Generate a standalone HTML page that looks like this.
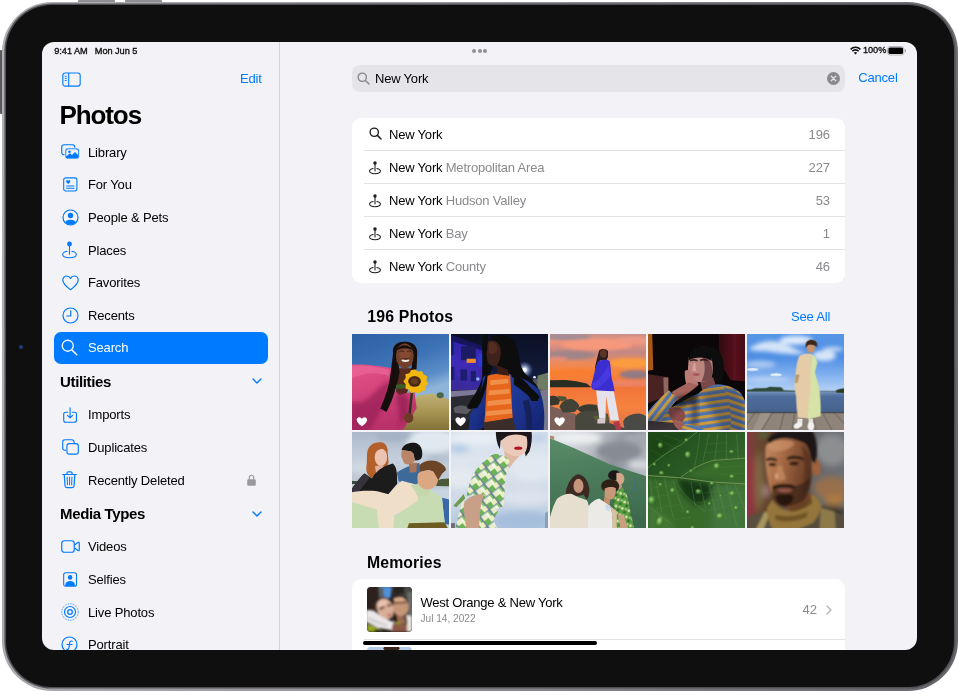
<!DOCTYPE html>
<html lang="en">
<head>
<meta charset="utf-8">
<title>Photos – Search</title>
<style>
*{box-sizing:border-box;margin:0;padding:0}
html,body{width:958px;height:692px;background:#fff;overflow:hidden}
body{font-family:"Liberation Sans",sans-serif;color:#000;position:relative;-webkit-font-smoothing:antialiased}
.abs{position:absolute}
#btn1,#btn2{position:absolute;top:0;height:4px;background:#8e8e93;border-radius:1px}
#btn1{left:78px;width:37px}
#btn2{left:125px;width:37px}
#btn3{position:absolute;left:0;top:50px;width:4px;height:64px;background:#58585d;border-radius:1px}
#device{position:absolute;left:2px;top:1.5px;width:955.7px;height:689px;border-radius:50px;background:linear-gradient(100deg,#b0b0b5 0%,#97979c 40%,#77777d 75%,#66666c 100%)}
#bezel{position:absolute;left:5.6px;top:5.1px;width:948.6px;height:682px;border-radius:46px;background:#0f0f0f;box-shadow:0 0 0 1.6px #505055}
#cam{position:absolute;left:19px;top:345px;width:4px;height:4px;border-radius:50%;background:#1d3f7a}
#screen{will-change:transform;position:absolute;left:42px;top:42px;width:875px;height:608px;border-radius:12px;background:#f2f2f7;overflow:hidden}
#screen *{position:absolute}
.t{white-space:nowrap;line-height:1}
#divider{left:237px;top:0;width:1px;height:608px;background:#d4d4d9}
.sb{font-size:13px;left:46px;color:#000;letter-spacing:-0.15px}
.hd{font-size:15px;font-weight:bold;left:18px;letter-spacing:-0.35px}
.blue{color:#007aff}
.gray{color:#8a8a8e}
.ico{overflow:visible}
#sel{left:12px;top:289.6px;width:214px;height:32.4px;border-radius:7px;background:#007aff}
#searchbar{left:310px;top:23px;width:493px;height:27px;border-radius:8px;background:#e4e4e9}
.card{background:#fff;border-radius:9px}
.sep{height:1px;background:#e2e2e5}
.row{font-size:13px;letter-spacing:-0.2px}
.cnt{font-size:13px;color:#8a8a8e;text-align:right;width:60px;left:728px;letter-spacing:-0.1px}
.ph{width:96.8px;height:96.5px;overflow:hidden;background:#888}
.ph svg{left:0;top:0;width:100%;height:100%}
</style>
</head>
<body>
<div id="btn1"></div><div id="btn2"></div><div id="btn3"></div>
<div id="device"></div><div id="bezel"></div>
<div id="cam"></div>
<div id="screen">
  
  <div class="t" id="st-time" style="left:12.3px;top:4.8px;font-size:9.2px;-webkit-text-stroke:0.35px #111;letter-spacing:-0.05px;color:#111">9:41 AM</div>
  <div class="t" id="st-date" style="left:52.8px;top:4.8px;font-size:9.2px;-webkit-text-stroke:0.35px #111;letter-spacing:-0.05px;color:#111">Mon Jun 5</div>
  <svg class="ico" id="st-wifi" style="left:808px;top:4px" width="11" height="9" viewBox="0 0 22 16">
    <path d="M11 16 L7.6 12.4 A5 5 0 0 1 14.4 12.4 Z" fill="#111"/>
    <path d="M4.6 9.4 A9 9 0 0 1 17.4 9.4" fill="none" stroke="#111" stroke-width="3.1" stroke-linecap="butt"/>
    <path d="M1.2 5.8 A13.6 13.6 0 0 1 20.8 5.8" fill="none" stroke="#111" stroke-width="3.1" stroke-linecap="butt"/>
  </svg>
  <div class="t" id="st-pct" style="left:821px;top:4.3px;font-size:9.2px;-webkit-text-stroke:0.35px #111;letter-spacing:-0.05px;color:#111">100%</div>
  <svg class="ico" id="st-batt" style="left:845px;top:3.5px" width="20" height="10" viewBox="0 0 40 20">
    <rect x="1" y="1" width="33" height="17" rx="5" fill="none" stroke="#a0a0a4" stroke-width="1.4"/>
    <rect x="2.8" y="2.8" width="29.4" height="13.4" rx="3.4" fill="#000"/>
    <path d="M36 6.5 A3.4 3.4 0 0 1 36 12.5 Z" fill="#8a8a8e"/>
  </svg>
  
  <div style="left:430px;top:7.2px;width:4px;height:4px;border-radius:50%;background:#909095"></div>
  <div style="left:435.7px;top:7.2px;width:4px;height:4px;border-radius:50%;background:#909095"></div>
  <div style="left:441.4px;top:7.2px;width:4px;height:4px;border-radius:50%;background:#909095"></div>

  
  <div id="divider"></div>
  <svg class="ico" id="i-sidebar" style="left:19.5px;top:29.5px" width="19" height="15" viewBox="0 0 40 32">
    <rect x="1.5" y="2" width="37" height="28" rx="5" fill="none" stroke="#007aff" stroke-width="2.4"/>
    <line x1="14" y1="2" x2="14" y2="30" stroke="#007aff" stroke-width="2.4"/>
    <line x1="5.5" y1="9" x2="10" y2="9" stroke="#007aff" stroke-width="2"/>
    <line x1="5.5" y1="13.5" x2="10" y2="13.5" stroke="#007aff" stroke-width="2"/>
    <line x1="5.5" y1="18" x2="10" y2="18" stroke="#007aff" stroke-width="2"/>
  </svg>
  <div class="t blue" id="edit" style="left:198px;top:30px;font-size:13px;letter-spacing:-0.2px">Edit</div>
  <div class="t" id="title" style="left:17.5px;top:60px;font-size:26px;font-weight:bold;letter-spacing:-1.1px">Photos</div>

  <div class="t sb" id="s1" style="top:104px">Library</div>
  <div class="t sb" id="s2" style="top:136px">For You</div>
  <div class="t sb" id="s3" style="top:169px">People &amp; Pets</div>
  <div class="t sb" id="s4" style="top:202px">Places</div>
  <div class="t sb" id="s5" style="top:234px">Favorites</div>
  <div class="t sb" id="s6" style="top:267px">Recents</div>
  <div id="sel"></div>
  <div class="t sb" id="s7" style="top:299.2px;color:#fff">Search</div>
  <div class="t hd" id="h1" style="top:332px">Utilities</div>
  <div class="t sb" id="s8" style="top:366px">Imports</div>
  <div class="t sb" id="s9" style="top:399px">Duplicates</div>
  <div class="t sb" id="s10" style="top:431.5px">Recently Deleted</div>
  <div class="t hd" id="h2" style="top:464px">Media Types</div>
  <div class="t sb" id="s11" style="top:498px">Videos</div>
  <div class="t sb" id="s12" style="top:531px">Selfies</div>
  <div class="t sb" id="s13" style="top:563.5px">Live Photos</div>
  <div class="t sb" id="s14" style="top:596px">Portrait</div>

  
  <svg class="ico" id="i-lib" style="left:18.5px;top:102.3px" width="19" height="16" viewBox="0 0 38 32">
    <rect x="1.5" y="1.5" width="26" height="20" rx="4.5" fill="none" stroke="#007aff" stroke-width="2.4"/>
    <rect x="8" y="8" width="28.5" height="22" rx="4.5" fill="#007aff" stroke="#f2f2f7" stroke-width="1.6"/>
    <path d="M10.5 25 L18 18.5 L22 22 L28 16 L34 22 L34 14 Q34 10.5 30.5 10.5 L14 10.5 Q10.5 10.5 10.5 14 Z" fill="#f2f2f7"/>
    <circle cx="17" cy="15.5" r="2.6" fill="#007aff"/>
  </svg>
  <svg class="ico" id="i-foryou" style="left:20.6px;top:135.2px" width="14.6" height="14.8" preserveAspectRatio="none" viewBox="0 0 32 34">
    <rect x="1.5" y="2" width="29" height="30" rx="4.5" fill="none" stroke="#007aff" stroke-width="2.4"/>
    <path d="M11.5 16 C6 12 6 7.5 9 7.5 C10.5 7.5 11.5 8.8 11.5 9.6 C11.5 8.8 12.5 7.5 14 7.5 C17 7.5 17 12 11.5 16 Z" fill="#007aff"/>
    <line x1="7" y1="20.5" x2="25" y2="20.5" stroke="#007aff" stroke-width="2.2"/>
    <line x1="7" y1="26" x2="25" y2="26" stroke="#007aff" stroke-width="2.2"/>
  </svg>
  <svg class="ico" id="i-people" style="left:19.5px;top:167.0px" width="17" height="17" viewBox="0 0 34 34">
    <defs><clipPath id="cp1"><circle cx="17" cy="17" r="14.5"/></clipPath></defs>
    <circle cx="17" cy="17" r="15" fill="none" stroke="#007aff" stroke-width="2.4"/>
    <circle cx="17" cy="13" r="5.4" fill="#007aff"/>
    <ellipse cx="17" cy="29" rx="11.5" ry="7.5" fill="#007aff" clip-path="url(#cp1)"/>
  </svg>
  <svg class="ico" id="i-places" style="left:20.3px;top:198.6px" width="15" height="18" preserveAspectRatio="none" viewBox="0 0 32 38">
    <circle cx="16" cy="6.5" r="5.2" fill="#007aff"/>
    <line x1="16" y1="10" x2="16" y2="28" stroke="#007aff" stroke-width="2.4" stroke-linecap="round"/>
    <path d="M11 21.8 C4.5 23 1.5 25.6 1.5 28.6 C1.5 32.6 8 35.5 16 35.5 C24 35.5 30.500 32.6 30.500 28.6 C30.500 25.600 27.500 23 21 21.800" fill="none" stroke="#007aff" stroke-width="2.3" stroke-linecap="round"/>
  </svg>
  <svg class="ico" id="i-fav" style="left:19.5px;top:233.0px" width="17" height="16" viewBox="0 0 34 32">
    <path d="M17 29.500 C5 21 1.600 15.500 1.600 10.200 C1.600 5.400 5.200 2 9.400 2 C12.800 2 15.600 4 17 6.800 C18.400 4 21.200 2 24.600 2 C28.800 2 32.400 5.400 32.400 10.200 C32.400 15.500 29 21 17 29.500 Z" fill="none" stroke="#007aff" stroke-width="2.400" stroke-linejoin="round"/>
  </svg>
  <svg class="ico" id="i-rec" style="left:19.5px;top:265.0px" width="17" height="17" viewBox="0 0 34 34">
    <circle cx="17" cy="17" r="15" fill="none" stroke="#007aff" stroke-width="2.400"/>
    <path d="M17.500 7.500 L17.500 18 L9.500 18" fill="none" stroke="#007aff" stroke-width="2.400" stroke-linecap="round" stroke-linejoin="round"/>
  </svg>
  <svg class="ico" id="i-search" style="left:19.3px;top:296.7px" width="17" height="17" viewBox="0 0 34 34">
    <circle cx="13.500" cy="13.500" r="11" fill="none" stroke="#fff" stroke-width="2.600"/>
    <line x1="21.500" y1="21.500" x2="31.500" y2="31.500" stroke="#fff" stroke-width="3" stroke-linecap="round"/>
  </svg>
  <svg class="ico" id="i-chev1" style="left:210px;top:336px" width="10" height="6" viewBox="0 0 20 12">
    <path d="M2 2 L10 10 L18 2" fill="none" stroke="#007aff" stroke-width="2.800" stroke-linecap="round" stroke-linejoin="round"/>
  </svg>
  <svg class="ico" id="i-imp" style="left:21.0px;top:364.6px" width="14.2" height="16.2" preserveAspectRatio="none" viewBox="0 0 30 36">
    <path d="M10 11.500 L6 11.500 Q1.500 11.500 1.500 16 L1.500 29.500 Q1.500 34 6 34 L24 34 Q28.500 34 28.500 29.500 L28.500 16 Q28.500 11.500 24 11.500 L20 11.500" fill="none" stroke="#007aff" stroke-width="2.400" stroke-linecap="round"/>
    <path d="M15 1.500 L15 23.500 M9.500 18.500 L15 24 L20.500 18.500" fill="none" stroke="#007aff" stroke-width="2.400" stroke-linecap="round" stroke-linejoin="round"/>
  </svg>
  <svg class="ico" id="i-dup" style="left:19.8px;top:397.2px" width="17" height="15.8" preserveAspectRatio="none" viewBox="0 0 36 36">
    <path d="M9 25.500 L6.500 25.500 Q1.500 25.500 1.500 20.500 L1.500 6.500 Q1.500 1.500 6.500 1.500 L20.500 1.500 Q25.500 1.500 25.500 6.500 L25.500 9" fill="none" stroke="#007aff" stroke-width="2.400"/>
    <rect x="10.500" y="10.500" width="24" height="24" rx="5" fill="none" stroke="#007aff" stroke-width="2.400"/>
  </svg>
  <svg class="ico" id="i-trash" style="left:20.3px;top:429.3px" width="15.1" height="17.6" preserveAspectRatio="none" viewBox="0 0 30 38">
    <path d="M1.500 7.500 L28.500 7.500 M10 7 L10 4.500 Q10 2 12.500 2 L17.500 2 Q20 2 20 4.500 L20 7" fill="none" stroke="#007aff" stroke-width="2.400" stroke-linecap="round"/>
    <path d="M4.500 8 L6 32 Q6.300 36 10 36 L20 36 Q23.700 36 24 32 L25.500 8" fill="none" stroke="#007aff" stroke-width="2.400" stroke-linejoin="round"/>
    <path d="M10.300 13 L10.800 30 M15 13 L15 30 M19.700 13 L19.200 30" fill="none" stroke="#007aff" stroke-width="2" stroke-linecap="round"/>
  </svg>
  <svg class="ico" id="i-lock" style="left:205px;top:431.500px" width="9" height="12" viewBox="0 0 18 24">
    <path d="M4.500 11 L4.500 7 A4.500 4.500 0 0 1 13.500 7 L13.500 11" fill="none" stroke="#98989d" stroke-width="2.400"/>
    <rect x="0.500" y="10.500" width="17" height="13" rx="2.500" fill="#98989d"/>
  </svg>
  <svg class="ico" id="i-chev2" style="left:210px;top:468.500px" width="10" height="6" viewBox="0 0 20 12">
    <path d="M2 2 L10 10 L18 2" fill="none" stroke="#007aff" stroke-width="2.800" stroke-linecap="round" stroke-linejoin="round"/>
  </svg>
  <svg class="ico" id="i-video" style="left:18.5px;top:498.0px" width="19" height="13" viewBox="0 0 38 26">
    <rect x="1.500" y="1.500" width="25" height="23" rx="5" fill="none" stroke="#007aff" stroke-width="2.400"/>
    <path d="M27 10 L34 5 Q36.500 3.500 36.500 6.500 L36.500 19.500 Q36.500 22.500 34 21 L27 16" fill="none" stroke="#007aff" stroke-width="2.400" stroke-linejoin="round"/>
  </svg>
  <svg class="ico" id="i-selfie" style="left:21.0px;top:530.0px" width="14.2" height="15" preserveAspectRatio="none" viewBox="0 0 32 32">
    <defs><clipPath id="cp2"><rect x="2" y="2" width="28" height="28" rx="3"/></clipPath></defs>
    <rect x="1.500" y="1.500" width="29" height="29" rx="4.500" fill="none" stroke="#007aff" stroke-width="2.400"/>
    <circle cx="16" cy="11.500" r="5" fill="#007aff"/>
    <ellipse cx="16" cy="28" rx="11" ry="9" fill="#007aff" clip-path="url(#cp2)"/>
  </svg>
  <svg class="ico" id="i-live" style="left:19.0px;top:561.0px" width="18" height="18" viewBox="0 0 36 36">
    <circle cx="18" cy="18" r="16.500" fill="none" stroke="#007aff" stroke-width="1.800" stroke-dasharray="1.600 1.900"/>
    <circle cx="18" cy="18" r="11" fill="none" stroke="#007aff" stroke-width="2.400"/>
    <circle cx="18" cy="18" r="4.600" fill="none" stroke="#007aff" stroke-width="2.600"/>
  </svg>
  <svg class="ico" id="i-port" style="left:19.1px;top:594.2px" width="17" height="17" viewBox="0 0 34 34">
    <circle cx="17" cy="17" r="15" fill="none" stroke="#007aff" stroke-width="2.400"/>
    <path d="M22.500 10.500 C19 9 17.500 11 17 15 L16 23 C15.500 27 13.500 27.500 11.500 26.500 M12 17 L22 17" fill="none" stroke="#007aff" stroke-width="2.400" stroke-linecap="round"/>
  </svg>

  
  <div id="searchbar"></div>
  <svg class="ico" id="i-s2" style="left:315.3px;top:29.8px" width="13" height="13" viewBox="0 0 26 26">
    <circle cx="10.500" cy="10.500" r="8.300" fill="none" stroke="#85858a" stroke-width="2.600"/>
    <line x1="16.800" y1="16.800" x2="24" y2="24" stroke="#85858a" stroke-width="2.800" stroke-linecap="round"/>
  </svg>
  <div class="t" id="q" style="left:333px;top:30px;font-size:13px;letter-spacing:-0.2px">New York</div>
  <svg class="ico" id="i-clear" style="left:785px;top:30px" width="13" height="13" viewBox="0 0 26 26">
    <circle cx="13" cy="13" r="13" fill="#8a8a8e"/>
    <path d="M8.500 8.500 L17.500 17.500 M17.500 8.500 L8.500 17.500" stroke="#e4e4e9" stroke-width="2.400" stroke-linecap="round"/>
  </svg>
  <div class="t blue" id="cancel" style="left:816.3px;top:29.3px;font-size:13px;letter-spacing:-0.2px">Cancel</div>

  
  <div class="card" id="card1" style="left:310px;top:76px;width:493px;height:165px"></div>
  <div class="sep" style="left:322px;top:108px;width:481px"></div>
  <div class="sep" style="left:322px;top:141px;width:481px"></div>
  <div class="sep" style="left:322px;top:174px;width:481px"></div>
  <div class="sep" style="left:322px;top:207px;width:481px"></div>
  <svg class="ico" id="i-r1" style="left:326.5px;top:85.2px" width="13" height="13" viewBox="0 0 26 26">
    <circle cx="10.500" cy="10.500" r="8.300" fill="none" stroke="#1c1c1e" stroke-width="2.700"/>
    <line x1="16.800" y1="16.800" x2="24" y2="24" stroke="#1c1c1e" stroke-width="3" stroke-linecap="round"/>
  </svg>
  <div class="t row" id="r1" style="left:347px;top:86px">New York</div>
  <div class="t row" id="r2" style="left:347px;top:119px">New York <span class="gray" style="position:static">Metropolitan Area</span></div>
  <div class="t row" id="r3" style="left:347px;top:152px">New York <span class="gray" style="position:static">Hudson Valley</span></div>
  <div class="t row" id="r4" style="left:347px;top:185px">New York <span class="gray" style="position:static">Bay</span></div>
  <div class="t row" id="r5" style="left:347px;top:218px">New York <span class="gray" style="position:static">County</span></div>
  <div class="t cnt" id="c1" style="top:86px">196</div>
  <div class="t cnt" id="c2" style="top:119px">227</div>
  <div class="t cnt" id="c3" style="top:152px">53</div>
  <div class="t cnt" id="c4" style="top:185px">1</div>
  <div class="t cnt" id="c5" style="top:218px">46</div>
  <svg class="ico pin" style="left:326.5px;top:117.500px" width="12" height="15" viewBox="0 0 32 38"><circle cx="16" cy="7" r="4.600" fill="#1c1c1e"/><line x1="16" y1="10" x2="16" y2="28" stroke="#1c1c1e" stroke-width="2.800" stroke-linecap="round"/><path d="M11 21.800 C4.500 23 1.500 25.600 1.500 28.600 C1.500 32.600 8 35.500 16 35.500 C24 35.500 30.500 32.600 30.500 28.600 C30.500 25.600 27.500 23 21 21.800" fill="none" stroke="#1c1c1e" stroke-width="2.700" stroke-linecap="round"/></svg>
  <svg class="ico pin" style="left:326.5px;top:150.500px" width="12" height="15" viewBox="0 0 32 38"><circle cx="16" cy="7" r="4.600" fill="#1c1c1e"/><line x1="16" y1="10" x2="16" y2="28" stroke="#1c1c1e" stroke-width="2.800" stroke-linecap="round"/><path d="M11 21.800 C4.500 23 1.500 25.600 1.500 28.600 C1.500 32.600 8 35.500 16 35.500 C24 35.500 30.500 32.600 30.500 28.600 C30.500 25.600 27.500 23 21 21.800" fill="none" stroke="#1c1c1e" stroke-width="2.700" stroke-linecap="round"/></svg>
  <svg class="ico pin" style="left:326.5px;top:183.500px" width="12" height="15" viewBox="0 0 32 38"><circle cx="16" cy="7" r="4.600" fill="#1c1c1e"/><line x1="16" y1="10" x2="16" y2="28" stroke="#1c1c1e" stroke-width="2.800" stroke-linecap="round"/><path d="M11 21.800 C4.500 23 1.500 25.600 1.500 28.600 C1.500 32.600 8 35.500 16 35.500 C24 35.500 30.500 32.600 30.500 28.600 C30.500 25.600 27.500 23 21 21.800" fill="none" stroke="#1c1c1e" stroke-width="2.700" stroke-linecap="round"/></svg>
  <svg class="ico pin" style="left:326.5px;top:216.500px" width="12" height="15" viewBox="0 0 32 38"><circle cx="16" cy="7" r="4.600" fill="#1c1c1e"/><line x1="16" y1="10" x2="16" y2="28" stroke="#1c1c1e" stroke-width="2.800" stroke-linecap="round"/><path d="M11 21.800 C4.500 23 1.500 25.600 1.500 28.600 C1.500 32.600 8 35.500 16 35.500 C24 35.500 30.500 32.600 30.500 28.600 C30.500 25.600 27.500 23 21 21.800" fill="none" stroke="#1c1c1e" stroke-width="2.700" stroke-linecap="round"/></svg>

  
  <div class="t" id="ph-h" style="left:325.3px;top:266.9px;font-size:15.8px;font-weight:bold;letter-spacing:0.17px">196 Photos</div>
  <div class="t blue" id="seeall" style="left:749px;top:268px;font-size:13px;letter-spacing:-0.2px">See All</div>

  
  <div class="ph" id="p1" style="left:310px;top:291.600px"><svg viewBox="14 18 656 652" preserveAspectRatio="none">
<defs>
<linearGradient id="p1sky" x1="0" y1="0" x2="0.35" y2="1"><stop offset="0" stop-color="#2c5ea2"/><stop offset="0.4" stop-color="#3c72b6"/><stop offset="0.62" stop-color="#5c8ec8"/><stop offset="0.74" stop-color="#8fb4da"/></linearGradient>
<linearGradient id="p1grass" x1="0" y1="0" x2="0" y2="1"><stop offset="0" stop-color="#c0b074"/><stop offset="0.45" stop-color="#a69452"/><stop offset="1" stop-color="#786830"/></linearGradient>
<linearGradient id="p1dress" x1="0" y1="0" x2="0.3" y2="1"><stop offset="0" stop-color="#e4558a"/><stop offset="0.45" stop-color="#d4437a"/><stop offset="1" stop-color="#b83068"/></linearGradient>
<filter id="p1b" x="-10%" y="-10%" width="120%" height="120%"><feGaussianBlur stdDeviation="5"/></filter>
<filter id="p1b2" x="-20%" y="-20%" width="140%" height="140%"><feGaussianBlur stdDeviation="14"/></filter>
</defs>
<rect x="0" y="0" width="700" height="700" fill="url(#p1sky)"/>
<g filter="url(#p1b)">
<path d="M330 700 L395 480 L470 432 L560 420 L620 440 L700 470 L700 700 Z" fill="url(#p1grass)"/>
<ellipse cx="612" cy="432" rx="24" ry="20" fill="#4c6650"/>

<path d="M325 250 L425 250 L420 330 L380 430 L310 440 Z" fill="#56291d"/>

<path d="M0 226 C90 218 200 232 282 250 C292 300 288 350 300 395 L335 430 C370 420 410 410 438 412 L452 520 L420 570 L345 690 L0 690 Z" fill="url(#p1dress)"/>
<path d="M0 470 C60 500 120 470 180 400 C200 380 240 340 270 330 L250 470 C200 560 150 640 120 690 L0 690 Z" fill="#9a2358" opacity="0.75" filter="url(#p1b2)"/>
<path d="M310 430 C350 400 380 420 400 470 L390 560 L340 640 L330 520 Z" fill="#8e1f50" opacity="0.7" filter="url(#p1b2)"/>
<path d="M0 235 C100 230 200 240 270 260 L265 300 C180 270 90 280 0 320 Z" fill="#ee6b9c" opacity="0.6"/>

<path d="M292 150 C284 88 328 68 372 70 C422 68 460 95 456 150 L452 255 L416 270 L425 150 C400 100 340 100 322 150 L336 275 C326 335 308 405 280 475 L248 545 L205 522 C244 440 266 360 276 280 Z" fill="#17110f"/>

<ellipse cx="372" cy="166" rx="60" ry="84" fill="#74402c"/>
<ellipse cx="372" cy="150" rx="40" ry="40" fill="#8a4f36" opacity="0.7"/>
<path d="M316 130 C330 85 410 85 428 130 C400 110 345 110 316 130 Z" fill="#17110f"/>
<ellipse cx="376" cy="196" rx="26" ry="11" fill="#f2ece6"/>
<path d="M335 138 C345 130 358 130 366 138 M388 138 C396 130 410 130 418 138" stroke="#2a1510" stroke-width="6" fill="none"/>
<path d="M345 186 C365 196 390 196 408 186 C400 178 355 178 345 186 Z" fill="#5a2a1e"/>

<path d="M412 410 L428 412 L412 560 L396 560 Z" fill="#26301a"/>
<ellipse cx="398" cy="585" rx="32" ry="34" fill="#6c3a28"/>
<ellipse cx="345" cy="372" rx="34" ry="16" fill="#3e5a22"/>

<path d="M440 258 L462 272 L488 268 L500 292 L524 304 L518 330 L530 354 L512 374 L510 400 L484 404 L466 422 L442 410 L416 418 L400 396 L376 386 L378 360 L362 338 L378 316 L376 290 L402 284 L416 262 Z" fill="#f2b711"/>
<ellipse cx="438" cy="338" rx="43" ry="36" fill="#4a2a13"/>
<ellipse cx="438" cy="338" rx="24" ry="20" fill="#6b3d1c"/>
</g>
<path transform="translate(46 580) scale(1.0)" d="M35 62 C10 44 0 32 0 18 C0 7 8 0 17 0 C25 0 32 5 35 12 C38 5 45 0 53 0 C62 0 70 7 70 18 C70 32 60 44 35 62 Z" fill="#fff"/>
</svg></div>
  <div class="ph" id="p2" style="left:408.800px;top:291.600px"><svg viewBox="14 18 656 652" preserveAspectRatio="none">
<defs>
<linearGradient id="p2sky" x1="0" y1="0" x2="0" y2="1"><stop offset="0" stop-color="#0a0f22"/><stop offset="0.45" stop-color="#131c3c"/><stop offset="0.6" stop-color="#26304e"/></linearGradient>
<linearGradient id="p2bld" x1="0" y1="0" x2="0" y2="1"><stop offset="0" stop-color="#2e20a8"/><stop offset="0.5" stop-color="#3c2cb8"/><stop offset="1" stop-color="#3a2c94"/></linearGradient>
<radialGradient id="p2glow"><stop offset="0" stop-color="#ffffff"/><stop offset="0.25" stop-color="#cfe0ff" stop-opacity="0.9"/><stop offset="1" stop-color="#4a66b0" stop-opacity="0"/></radialGradient>
<linearGradient id="p2jk" x1="0" y1="0" x2="1" y2="1"><stop offset="0" stop-color="#2240a4"/><stop offset="0.6" stop-color="#1a2e84"/><stop offset="1" stop-color="#14226a"/></linearGradient>
<filter id="p2b" x="-10%" y="-10%" width="120%" height="120%"><feGaussianBlur stdDeviation="5"/></filter>
</defs>
<rect x="0" y="0" width="700" height="700" fill="url(#p2sky)"/>
<g filter="url(#p2b)">
<path d="M0 20 L230 110 L230 400 L0 410 Z" fill="url(#p2bld)"/>
<path d="M0 18 L230 100 L230 130 L0 60 Z" fill="#17145c"/>
<rect x="82" y="100" width="100" height="95" fill="#1c1a66"/>
<rect x="120" y="185" width="62" height="28" fill="#f0902c"/>
<rect x="200" y="150" width="30" height="90" fill="#2a3ad0"/>
<rect x="78" y="258" width="44" height="75" fill="#1e1c70"/>
<rect x="148" y="268" width="34" height="70" fill="#1e1c70"/>
<rect x="14" y="240" width="22" height="90" fill="#1e1c70"/>
<rect x="14" y="60" width="18" height="100" fill="#1e1c70"/>

<path d="M0 400 L240 395 L240 700 L0 700 Z" fill="#2c2a32"/>
<path d="M0 600 L240 600 L240 700 L0 700 Z" fill="#222024"/>
<path d="M0 405 L200 395 L200 425 L0 445 Z" fill="#7c7a98"/>
<path d="M30 520 C70 490 120 500 150 530 L120 560 L40 550 Z" fill="#5c5c62"/>

<path d="M560 330 L700 290 L700 700 L560 700 Z" fill="#565866"/>
<path d="M600 300 L700 270 L700 400 L600 390 Z" fill="#6e7c64"/>
<path d="M620 400 L700 390 L700 700 L640 700 Z" fill="#7a7a8c"/>
<circle cx="512" cy="260" r="60" fill="url(#p2glow)"/>
<circle cx="512" cy="260" r="14" fill="#fff"/>
<circle cx="580" cy="310" r="9" fill="#e8ecff"/>
<circle cx="196" cy="322" r="12" fill="#8fb0ff"/>

<rect x="226" y="0" width="34" height="700" fill="#0a0a0e"/>

<path d="M285 40 C330 15 420 20 450 80 C480 160 470 230 520 290 C580 340 620 380 615 440 C560 480 480 470 440 420 L400 300 L330 250 Z" fill="#0c0a0c"/>
<path d="M300 230 C280 300 240 380 200 450 C180 500 150 540 125 520 C120 500 180 430 210 360 C230 300 250 250 270 215 Z" fill="#0c0a0c"/>

<path d="M230 310 L290 270 L270 640 L130 690 L145 560 C200 480 220 400 230 310 Z" fill="url(#p2jk)"/>
<path d="M400 290 C470 300 560 340 615 400 C640 460 650 540 645 620 L640 700 L450 700 L430 590 Z" fill="url(#p2jk)"/>
<path d="M440 360 C500 400 560 460 600 470 L615 440 C560 380 500 330 440 320 Z" fill="#0c0a0c"/>
<path d="M500 470 C520 540 530 600 520 690 L560 690 C570 600 560 520 540 460 Z" fill="#15205c"/>
<path d="M420 300 C470 340 520 400 560 470 L600 470 C580 400 520 330 450 290 Z" fill="#0c0a0c"/>
<path d="M290 260 C270 330 240 420 215 480 L190 520 L160 520 C200 450 240 350 262 250 Z" fill="#0c0a0c"/>

<path d="M262 300 C310 285 370 280 415 290 L432 585 L240 618 C250 520 250 400 262 300 Z" fill="#e5661e"/>
<path d="M280 330 L400 320 L405 350 L280 365 Z M270 400 L410 390 L412 420 L268 432 Z M262 470 L420 455 L422 490 L260 505 Z M255 540 L425 525 L428 555 L252 572 Z" fill="#f39a52" opacity="0.8"/>

<path d="M238 615 L435 585 L460 700 L236 700 Z" fill="#3a2e2c"/>

<path d="M265 70 C300 50 345 70 350 120 C355 170 345 210 320 232 C295 240 270 228 262 200 C258 185 262 175 255 165 C250 150 262 130 260 110 Z" fill="#40221a"/>
<path d="M270 80 C295 65 325 80 330 120 C320 150 300 160 270 150 Z" fill="#5c3224" opacity="0.7"/>
<path d="M320 225 L400 260 L410 300 L330 290 Z" fill="#3a1f18"/>
<path d="M285 45 C330 20 400 25 430 70 L360 130 C350 90 320 60 285 45 Z" fill="#0c0a0c"/>
</g>
<path transform="translate(44 580)" d="M35 62 C10 44 0 32 0 18 C0 7 8 0 17 0 C25 0 32 5 35 12 C38 5 45 0 53 0 C62 0 70 7 70 18 C70 32 60 44 35 62 Z" fill="#fff"/>
</svg></div>
  <div class="ph" id="p3" style="left:507.600px;top:291.600px"><svg viewBox="12 18 656 652" preserveAspectRatio="none">
<defs>
<linearGradient id="p3sky" x1="0" y1="0" x2="0" y2="1"><stop offset="0" stop-color="#b88e90"/><stop offset="0.1" stop-color="#f0947a"/><stop offset="0.2" stop-color="#c08884"/><stop offset="0.3" stop-color="#ec8a5c"/><stop offset="0.4" stop-color="#fa8636"/><stop offset="0.48" stop-color="#f47a3c"/><stop offset="0.55" stop-color="#e47a58"/></linearGradient>
<linearGradient id="p3water" x1="0" y1="0" x2="0" y2="1"><stop offset="0" stop-color="#f27438"/><stop offset="0.4" stop-color="#f6823e"/><stop offset="0.8" stop-color="#e07448"/><stop offset="1" stop-color="#c06c54"/></linearGradient>
<filter id="p3b" x="-10%" y="-10%" width="120%" height="120%"><feGaussianBlur stdDeviation="5"/></filter>
<filter id="p3c" x="-30%" y="-30%" width="160%" height="160%"><feGaussianBlur stdDeviation="11"/></filter>
</defs>
<rect x="0" y="0" width="700" height="700" fill="url(#p3sky)"/>
<g filter="url(#p3c)">
<ellipse cx="120" cy="36" rx="170" ry="22" fill="#a48c94"/>
<ellipse cx="330" cy="92" rx="240" ry="36" fill="#f8987a"/>
<ellipse cx="580" cy="60" rx="110" ry="22" fill="#ec9884"/>
<ellipse cx="150" cy="160" rx="170" ry="30" fill="#a08488"/>
<ellipse cx="60" cy="185" rx="70" ry="12" fill="#ee8e74"/>
<ellipse cx="560" cy="215" rx="140" ry="34" fill="#fa9c3c"/>
<ellipse cx="200" cy="285" rx="210" ry="34" fill="#f87e32"/>
<ellipse cx="590" cy="292" rx="110" ry="30" fill="#927a84"/>
<ellipse cx="500" cy="350" rx="200" ry="20" fill="#ee8468"/>
</g>
<rect x="0" y="376" width="700" height="330" fill="url(#p3water)"/>
<g filter="url(#p3b)">
<path d="M0 330 L120 328 L190 338 L260 352 L292 378 L0 378 Z" fill="#2a2e20"/>
<path d="M0 500 L190 560 L185 700 L0 700 Z" fill="#7c5e58"/>
<path d="M0 440 C30 430 70 435 80 465 L70 495 L0 505 Z" fill="#38382f"/>
<path d="M62 436 L120 442 L126 462 L86 474 Z" fill="#4c5238"/>
<path d="M76 510 C90 470 130 452 160 458 C190 470 212 495 210 510 L180 545 L100 548 Z" fill="#414236"/>
<path d="M195 525 C220 495 270 485 330 498 L345 560 L220 545 Z" fill="#3a3a32"/>
<path d="M183 580 C200 540 260 525 345 540 L405 558 L414 620 L560 668 L560 700 L183 700 Z" fill="#46463e"/>
<path d="M300 575 L400 560 L405 620 L320 600 Z" fill="#5a5c3a"/>
<path d="M508 610 C520 575 570 555 620 556 C650 560 680 580 680 610 L680 700 L525 700 Z" fill="#4a4a44"/>

<path d="M345 130 C355 115 395 115 405 135 L405 170 L395 195 L350 195 L330 250 L316 252 C322 215 335 170 345 130 Z" fill="#2a1a18"/>
<ellipse cx="374" cy="150" rx="24" ry="28" fill="#5a3426"/>
<path d="M335 205 C360 190 400 188 415 200 C428 240 420 300 440 350 L450 405 C410 415 360 405 330 398 C305 400 290 385 292 365 C300 330 310 300 318 255 Z" fill="#3a2dd0"/>
<path d="M300 350 C340 330 380 290 410 220 L420 300 C390 350 340 385 300 392 Z" fill="#4a3ce4" opacity="0.8"/>
<path d="M325 400 L445 405 C455 470 470 540 480 600 L422 602 C410 540 400 480 392 440 L388 590 L346 590 C340 520 330 460 325 400 Z" fill="#e6e2ec"/>
<path d="M335 592 L388 590 L385 622 L332 622 Z" fill="#d8c8cc"/>
<path d="M440 612 L480 606 L496 664 L462 668 Z" fill="#b0384a"/>
</g>
<path transform="translate(42 580)" d="M35 62 C10 44 0 32 0 18 C0 7 8 0 17 0 C25 0 32 5 35 12 C38 5 45 0 53 0 C62 0 70 7 70 18 C70 32 60 44 35 62 Z" fill="#fff"/>
</svg></div>
  <div class="ph" id="p4" style="left:606.400px;top:291.600px"><svg viewBox="8 18 657 652" preserveAspectRatio="none">
<defs>
<linearGradient id="p4cur" x1="0" y1="0" x2="1" y2="0"><stop offset="0" stop-color="#2e080e"/><stop offset="0.5" stop-color="#58121c"/><stop offset="1" stop-color="#420c16"/></linearGradient>
<pattern id="p4st" width="40" height="44" patternUnits="userSpaceOnUse" patternTransform="rotate(-8)"><rect width="40" height="44" fill="#5074b0"/><rect width="40" height="21" fill="#cc9a3e"/></pattern>
<pattern id="p4st2" width="40" height="44" patternUnits="userSpaceOnUse" patternTransform="rotate(-52)"><rect width="40" height="44" fill="#5074b0"/><rect width="40" height="21" fill="#cc9a3e"/></pattern>
<pattern id="p4st3" width="40" height="44" patternUnits="userSpaceOnUse" patternTransform="rotate(18)"><rect width="40" height="44" fill="#5074b0"/><rect width="40" height="21" fill="#cc9a3e"/></pattern>
<filter id="p4b" x="-10%" y="-10%" width="120%" height="120%"><feGaussianBlur stdDeviation="5"/></filter>
<filter id="p4c" x="-30%" y="-30%" width="160%" height="160%"><feGaussianBlur stdDeviation="18"/></filter>
</defs>
<rect x="0" y="0" width="700" height="700" fill="#0b0709"/>
<g filter="url(#p4b)">
<path d="M488 0 L700 0 L700 340 L570 330 L520 250 L488 120 Z" fill="url(#p4cur)"/>
<path d="M0 0 L36 0 L44 260 L0 268 Z" fill="#a85814"/>
<path d="M0 288 L150 310 L152 430 L0 490 Z" fill="#4a2222"/>
<path d="M112 312 L144 312 L144 420 L116 430 Z" fill="#8a6a64"/>
<path d="M0 600 L250 620 L240 700 L0 700 Z" fill="#3a3438"/>

<path d="M292 150 C302 105 380 88 450 105 C510 130 528 200 524 280 C520 335 490 362 450 356 L440 200 C400 160 340 150 292 175 Z" fill="#0c0a0c"/>

<path d="M360 330 L450 310 L480 400 L380 415 Z" fill="#7a4a46"/>

<path d="M285 175 C330 150 400 150 438 178 C452 220 450 280 440 310 C410 345 360 350 318 335 C290 320 275 280 280 240 Z" fill="#bc847e"/>
<path d="M375 165 C440 175 452 250 440 310 C420 335 400 340 370 338 C400 290 400 220 375 165 Z" fill="#6a4042" opacity="0.85"/>
<path d="M285 170 C330 140 400 140 440 175 L440 200 C400 170 330 170 285 195 Z" fill="#0a0809"/>
<path d="M292 192 C310 184 330 186 345 194 L345 204 C328 198 310 198 292 204 Z M362 190 C380 182 400 184 415 194 L414 204 C398 196 380 196 362 202 Z" fill="#3a2224"/>
<ellipse cx="335" cy="292" rx="24" ry="9" fill="#a85458"/>
<path d="M318 215 C312 240 306 258 312 268 L338 270 C332 252 330 235 330 215 Z" fill="#e0a8a0" opacity="0.8"/>

<path d="M258 268 C275 255 295 262 305 290 C320 320 345 340 352 358 C330 385 300 392 275 380 C262 345 255 305 258 268 Z" fill="#bc7c74"/>
<path d="M170 410 C210 385 250 360 285 345 L350 362 C310 400 260 430 205 470 Z" fill="#a4645c"/>

<path d="M0 560 C40 500 100 440 150 400 L212 455 C190 480 170 500 160 520 C230 480 300 440 350 420 C370 400 420 370 480 358 C540 362 600 380 640 420 C680 480 700 560 700 700 L240 700 L250 625 L0 602 Z" fill="url(#p4st)"/>
<path d="M0 560 C40 500 100 440 150 400 L212 455 C170 500 120 560 90 610 L0 602 Z" fill="url(#p4st2)"/>
<path d="M520 370 C580 380 640 420 665 480 L700 700 L560 700 C580 600 570 480 520 370 Z" fill="url(#p4st3)"/>
<path d="M300 440 C330 420 350 430 345 520 L340 640 L300 650 C310 580 310 500 300 440 Z" fill="#1a2438" opacity="0.6" filter="url(#p4c)"/>
<path d="M150 520 C190 505 240 515 255 545 C265 570 260 595 240 612 L170 598 C150 575 145 545 150 520 Z" fill="#8c4c4c"/>
<path d="M170 596 L250 618 L260 660 L240 690 L190 640 Z" fill="#a05c58"/>
<path d="M240 640 C300 620 380 640 420 700 L240 700 Z" fill="url(#p4st3)"/>
<path d="M360 420 C420 380 520 370 620 400 L665 470 L665 700 L520 700 C480 600 420 500 360 420 Z" fill="#0a0a18" opacity="0.28" filter="url(#p4c)"/>
<path d="M0 600 L120 540 L200 470 L230 520 L150 600 L0 640 Z" fill="#0a0a18" opacity="0.3" filter="url(#p4c)"/>
<path d="M200 450 L350 420 L330 470 L210 520 Z" fill="#0b0709" opacity="0.8" filter="url(#p4c)"/>
</g>
</svg></div>
  <div class="ph" id="p5" style="left:705.200px;top:291.600px"><svg viewBox="8 18 655 652" preserveAspectRatio="none">
<defs>
<linearGradient id="p5sky" x1="0" y1="0" x2="0" y2="1"><stop offset="0" stop-color="#5896e6"/><stop offset="0.25" stop-color="#4f8ee4"/><stop offset="0.45" stop-color="#8ab6f0"/><stop offset="0.58" stop-color="#b8d4f6"/></linearGradient>
<linearGradient id="p5w" x1="0" y1="0" x2="0" y2="1"><stop offset="0" stop-color="#7c9cc4"/><stop offset="0.25" stop-color="#4e6e9c"/><stop offset="1" stop-color="#46628e"/></linearGradient>
<filter id="p5b" x="-10%" y="-10%" width="120%" height="120%"><feGaussianBlur stdDeviation="4"/></filter>
<filter id="p5c" x="-30%" y="-30%" width="160%" height="160%"><feGaussianBlur stdDeviation="16"/></filter>
</defs>
<rect x="0" y="0" width="700" height="700" fill="url(#p5sky)"/>
<g filter="url(#p5c)">
<path d="M20 120 C100 60 200 50 280 90 C330 120 380 140 420 150 C330 160 240 150 180 140 C120 130 60 140 20 120 Z" fill="#d4e4f8"/>
<ellipse cx="340" cy="60" rx="110" ry="30" fill="#e0ecfa"/>
<ellipse cx="530" cy="165" rx="80" ry="36" fill="#d8e6f8"/>
<ellipse cx="590" cy="120" rx="70" ry="16" fill="#c4daf6"/>
<ellipse cx="100" cy="225" rx="100" ry="26" fill="#a8c8f2"/>
<ellipse cx="150" cy="325" rx="150" ry="14" fill="#c0d6f4"/>
</g>
<g filter="url(#p5b)">
<ellipse cx="205" cy="293" rx="40" ry="9" fill="#eaf2fc"/>
<ellipse cx="45" cy="257" rx="40" ry="11" fill="#e0ecfa"/>
<rect x="0" y="402" width="700" height="150" fill="url(#p5w)"/>
<path d="M0 395 L40 392 L60 385 L140 382 L160 374 L240 378 L258 398 L340 400 L340 406 L0 406 Z" fill="#2f4a3a"/>
<path d="M608 398 L640 388 L668 384 L668 416 L612 414 Z" fill="#2a3a26"/>
<path d="M500 400 L608 402 L608 408 L500 408 Z" fill="#6a7c90"/>
<rect x="0" y="548" width="700" height="150" fill="#8e847a"/>
<rect x="0" y="544" width="700" height="8" fill="#3a4048"/>
<path d="M60 552 L0 640 M180 552 L90 700 M260 552 L220 700 M330 552 L310 700 M520 552 L600 700 M600 552 L700 660 M450 552 L480 700" stroke="#5e5650" stroke-width="5" fill="none"/>
<path d="M100 552 L30 700 L80 700 L170 552 Z" fill="#a49a8e" opacity="0.7"/>

<path d="M350 590 L385 590 L380 640 L345 650 Z M425 590 L455 590 L458 650 L425 650 Z" fill="#e8e4e0"/>
<ellipse cx="352" cy="636" rx="30" ry="18" fill="#f4f2f0" transform="rotate(-25 352 636)"/>
<ellipse cx="440" cy="642" rx="22" ry="28" fill="#f4f2f0"/>
<path d="M362 165 C390 150 420 148 440 152 L442 420 C430 480 420 540 410 585 L352 582 C345 540 340 480 340 440 C330 400 325 340 335 300 C340 250 345 200 362 165 Z" fill="#e6cca6"/>
<path d="M440 152 C460 160 480 185 484 210 C478 240 470 260 468 280 C480 320 495 370 500 410 C506 470 508 530 506 572 L430 592 L410 585 C418 540 425 480 435 420 Z" fill="#d6e2a6"/>
<path d="M335 300 C340 290 360 285 362 300 L350 350 L332 350 Z" fill="#b89870"/>
<ellipse cx="440" cy="112" rx="28" ry="34" fill="#c8926c"/>
<path d="M404 95 C405 65 430 55 452 58 C478 60 488 82 480 108 C470 90 440 85 420 92 C412 100 408 108 406 112 Z" fill="#3c2618"/>
</g>
</svg></div>
  <div class="ph" id="p6" style="left:310px;top:389.800px"><svg viewBox="14 18 656 657" preserveAspectRatio="none">
<defs>
<linearGradient id="p6sky" x1="0" y1="0" x2="0" y2="1"><stop offset="0" stop-color="#aab6c8"/><stop offset="0.3" stop-color="#c6d0dc"/><stop offset="0.55" stop-color="#bac5d2"/><stop offset="0.6" stop-color="#c8d4e0"/></linearGradient>
<filter id="p6b" x="-10%" y="-10%" width="120%" height="120%"><feGaussianBlur stdDeviation="5"/></filter>
<filter id="p6c" x="-30%" y="-30%" width="160%" height="160%"><feGaussianBlur stdDeviation="18"/></filter>
</defs>
<rect x="0" y="0" width="700" height="700" fill="url(#p6sky)"/>
<g filter="url(#p6c)">
<ellipse cx="560" cy="80" rx="180" ry="80" fill="#e0e8f0"/>
<ellipse cx="80" cy="260" rx="90" ry="40" fill="#d0d8e2"/>
<ellipse cx="300" cy="50" rx="120" ry="30" fill="#a4b0c4"/>
<ellipse cx="600" cy="200" rx="90" ry="30" fill="#b4c0d0"/>
</g>
<g filter="url(#p6b)">
<path d="M585 350 L620 338 L680 334 L680 388 L585 386 Z" fill="#4c5a34"/>
<path d="M0 350 L60 354 L60 372 L0 372 Z" fill="#3c4a3c"/>

<path d="M318 295 C350 270 400 250 470 228 L480 310 L455 375 L330 355 Z" fill="#3c6a9a"/>
<path d="M625 465 L680 480 L680 650 L640 645 Z" fill="#3868a8"/>

<path d="M118 150 C130 100 180 80 225 92 C250 105 258 135 256 160 L262 225 C250 260 230 295 215 300 L165 340 C130 330 105 300 112 250 C118 215 112 180 118 150 Z" fill="#b4602c"/>
<ellipse cx="210" cy="190" rx="42" ry="60" fill="#ecc2b0"/>
<path d="M165 130 C190 105 235 105 252 140 C230 125 195 130 170 160 Z" fill="#b4602c"/>
<path d="M170 250 L225 245 L232 300 L180 320 Z" fill="#e0b09c"/>

<path d="M0 420 C40 370 70 320 100 300 L150 335 C170 290 220 250 290 232 C315 250 322 290 320 370 L262 440 L0 458 Z" fill="#1c1a1e"/>
<path d="M0 420 C40 370 70 320 100 300 L135 330 C100 370 70 410 50 450 L0 458 Z" fill="#34323a"/>

<path d="M350 140 C360 105 400 88 440 92 C475 100 492 130 490 170 C490 195 480 208 462 210 L440 212 L430 165 L415 150 L355 140 Z" fill="#151315"/>
<path d="M352 140 L415 150 L432 170 L440 212 C430 235 400 245 372 235 C358 220 358 200 350 190 C345 175 350 158 352 140 Z" fill="#b98468"/>
<path d="M400 235 L455 225 L450 290 L405 295 Z" fill="#a87458"/>

<path d="M0 500 L200 520 L330 585 C360 520 400 450 440 400 L470 375 C520 400 580 430 622 462 L645 645 L400 700 L0 700 Z" fill="#c8dcb4"/>
<path d="M400 640 L640 632 L680 700 L380 700 Z" fill="#6c5c22"/>
<path d="M0 432 C60 418 130 416 185 422 L262 442 C290 410 320 375 352 350 L432 372 C450 410 458 450 462 482 C410 520 350 560 300 585 L292 700 L200 700 L182 545 L0 492 Z" fill="#f0dfc8"/>
<path d="M412 378 L470 372 L548 420 L520 450 L460 455 Z" fill="#c4d8ac"/>
<path d="M470 245 C500 210 570 200 610 228 C640 245 655 268 650 278 L625 300 L595 352 L565 290 C540 270 500 280 478 296 Z" fill="#6c4428"/>
<path d="M462 300 C480 280 540 272 568 290 L598 345 C590 380 570 400 540 408 C505 414 475 400 462 365 C455 340 456 320 462 300 Z" fill="#dca884"/>
</g>
</svg></div>
  <div class="ph" id="p7" style="left:408.800px;top:389.800px"><svg viewBox="14 18 656 657" preserveAspectRatio="none">
<defs>
<linearGradient id="p7sky" x1="0" y1="0" x2="0" y2="1"><stop offset="0" stop-color="#d2deec"/><stop offset="0.3" stop-color="#dde5ee"/><stop offset="0.7" stop-color="#ced9e6"/><stop offset="1" stop-color="#aac2de"/></linearGradient>
<pattern id="p7pl" width="80" height="80" patternUnits="userSpaceOnUse" patternTransform="rotate(-38)"><rect width="80" height="80" fill="#86c468"/><rect width="40" height="40" fill="#eceec0"/><rect x="40" y="40" width="40" height="40" fill="#e8eeca"/><rect x="36" width="7" height="80" fill="#3c4c94"/><rect y="36" width="80" height="6" fill="#5a70b0"/><rect x="44" y="0" width="36" height="36" fill="#6cb458"/><rect x="0" y="44" width="20" height="36" fill="#f2f4e4"/></pattern>
<filter id="p7b" x="-10%" y="-10%" width="120%" height="120%"><feGaussianBlur stdDeviation="5"/></filter>
<filter id="p7c" x="-30%" y="-30%" width="160%" height="160%"><feGaussianBlur stdDeviation="20"/></filter>
</defs>
<rect x="0" y="0" width="700" height="700" fill="url(#p7sky)"/>
<g filter="url(#p7c)">
<ellipse cx="180" cy="60" rx="190" ry="50" fill="#e8eef4"/>
<ellipse cx="560" cy="260" rx="150" ry="90" fill="#e2e8f0"/>
<ellipse cx="80" cy="330" rx="100" ry="70" fill="#e4eaf0"/>
<ellipse cx="520" cy="460" rx="160" ry="50" fill="#dce4ee"/>
<ellipse cx="70" cy="130" rx="70" ry="30" fill="#b4cae6"/>
<ellipse cx="610" cy="60" rx="60" ry="30" fill="#c0d2e8"/>
<ellipse cx="500" cy="620" rx="200" ry="60" fill="#a4bedc"/>
</g>
<g filter="url(#p7b)">
<path d="M652 570 L672 560 L672 700 L650 700 Z" fill="#8aa0b8"/>
<path d="M14 640 L40 638 L42 700 L14 700 Z" fill="#6c6c7c"/>

<path d="M318 10 L560 10 C566 60 560 110 545 150 L520 185 L508 110 L420 30 L352 60 L345 135 C325 100 316 50 318 10 Z" fill="#1e181a"/>

<path d="M372 140 L480 180 C450 210 425 240 408 268 L385 220 Z" fill="#e0b8a4"/>

<path d="M352 50 C400 20 480 15 520 30 C535 70 535 120 520 150 C505 178 470 188 430 178 C395 168 365 140 352 110 Z" fill="#eccaba"/>
<ellipse cx="470" cy="128" rx="28" ry="11" fill="#b01224"/>
<path d="M330 10 L540 10 L525 50 C480 30 420 30 380 55 L350 80 Z" fill="#1e181a"/>

<path d="M178 285 C220 230 270 185 305 168 C340 165 385 180 412 212 C400 260 385 310 382 352 C378 410 376 470 370 522 L312 548 L240 442 L120 452 C130 390 150 330 178 285 Z" fill="url(#p7pl)"/>
<path d="M90 500 C140 470 200 455 242 450 L332 560 L300 622 L342 700 L40 700 C50 640 70 560 90 500 Z" fill="url(#p7pl)"/>
<path d="M30 520 L100 440 L110 470 L50 530 Z" fill="#6c9c4c"/>

<path d="M100 505 C120 470 160 442 236 440 C225 480 215 520 212 560 L202 700 L122 700 C112 640 100 570 100 505 Z" fill="#c8a088"/>
</g>
</svg></div>
  <div class="ph" id="p8" style="left:507.600px;top:389.800px"><svg viewBox="12 18 656 657" preserveAspectRatio="none">
<defs>
<linearGradient id="p8sky" x1="0" y1="0" x2="1" y2="0.6"><stop offset="0" stop-color="#e2e6ea"/><stop offset="0.35" stop-color="#c4c8ce"/><stop offset="0.6" stop-color="#8c9198"/><stop offset="0.85" stop-color="#b4b8c0"/></linearGradient>
<linearGradient id="p8wall" x1="0" y1="0" x2="0.2" y2="1"><stop offset="0" stop-color="#5a8c6a"/><stop offset="0.5" stop-color="#4a7a5a"/><stop offset="1" stop-color="#3e6a4e"/></linearGradient>
<pattern id="p8pr" width="46" height="46" patternUnits="userSpaceOnUse" patternTransform="rotate(20)"><rect width="46" height="46" fill="#5a9c40"/><circle cx="12" cy="12" r="10" fill="#d8e4b0"/><circle cx="34" cy="32" r="9" fill="#2c6c2c"/><circle cx="36" cy="8" r="6" fill="#cfe0a8"/></pattern>
<filter id="p8b" x="-10%" y="-10%" width="120%" height="120%"><feGaussianBlur stdDeviation="5"/></filter>
<filter id="p8c" x="-30%" y="-30%" width="160%" height="160%"><feGaussianBlur stdDeviation="18"/></filter>
</defs>
<rect x="0" y="0" width="700" height="700" fill="url(#p8sky)"/>
<g filter="url(#p8c)">
<ellipse cx="200" cy="60" rx="160" ry="40" fill="#eceef0"/>
<ellipse cx="480" cy="150" rx="150" ry="60" fill="#868c94"/>
<ellipse cx="620" cy="240" rx="80" ry="30" fill="#d4d8dc"/>
<ellipse cx="600" cy="60" rx="100" ry="30" fill="#a4a8b0"/>
</g>
<g filter="url(#p8b)">
<path d="M0 55 L180 130 L420 240 L680 325 L680 700 L0 700 Z" fill="url(#p8wall)"/>
<path d="M0 55 L40 70 L40 48 L0 40 Z" fill="#b08a70"/>
<rect x="585" y="330" width="8" height="90" fill="#3c6ca0"/>

<ellipse cx="448" cy="312" rx="42" ry="34" fill="#1a1618"/>
<path d="M462 298 C485 292 510 300 516 330 C518 355 505 375 482 382 L462 360 Z" fill="#d2a68a"/>
<path d="M470 370 L500 380 L495 415 L468 410 Z" fill="#c89c80"/>
<path d="M440 470 C455 430 480 405 500 400 C520 410 540 450 550 520 L582 680 L460 690 L452 560 Z" fill="url(#p8pr)"/>
<path d="M472 575 L512 585 L548 690 L490 690 Z" fill="#c8a080"/>

<path d="M118 440 C125 380 150 325 200 305 C245 310 270 350 278 400 C282 440 270 470 262 480 L240 445 L165 462 L140 480 Z" fill="#3a2a22"/>
<ellipse cx="205" cy="385" rx="34" ry="48" fill="#c4947c"/>
<path d="M0 650 C20 560 40 500 62 470 C90 448 130 435 160 440 L205 462 L262 482 C278 510 282 560 275 620 L268 700 L0 700 Z" fill="#e6dfd0"/>

<ellipse cx="420" cy="385" rx="62" ry="46" fill="#2e2018"/>
<path d="M382 405 C400 390 440 388 458 400 C460 430 455 455 440 470 C420 485 395 478 382 455 Z" fill="#c89878"/>
<path d="M380 460 L420 480 L415 520 L375 510 Z" fill="#c09070"/>
<path d="M272 525 C290 495 320 475 345 470 L420 522 C435 560 442 620 435 700 L268 700 Z" fill="#eceae6"/>
<path d="M418 520 L466 560 L462 700 L432 700 C440 620 435 560 418 520 Z" fill="#d8c0a0"/>
<path d="M385 512 L420 520 L415 560 L392 548 Z" fill="#c8d8f0"/>
</g>
</svg></div>
  <div class="ph" id="p9" style="left:606.400px;top:389.800px"><svg viewBox="8 18 657 657" preserveAspectRatio="none">
<defs>
<linearGradient id="p9bg" x1="0" y1="0" x2="1" y2="1"><stop offset="0" stop-color="#1c4a1a"/><stop offset="0.4" stop-color="#2a5a24"/><stop offset="0.7" stop-color="#38692e"/><stop offset="1" stop-color="#437838"/></linearGradient>
<radialGradient id="p9d" cx="0.4" cy="0.4" r="0.7"><stop offset="0" stop-color="#a8d888"/><stop offset="0.45" stop-color="#5c9c40"/><stop offset="1" stop-color="#2c5c26"/></radialGradient>
<filter id="p9b" x="-10%" y="-10%" width="120%" height="120%"><feGaussianBlur stdDeviation="4"/></filter>
<filter id="p9c" x="-30%" y="-30%" width="160%" height="160%"><feGaussianBlur stdDeviation="18"/></filter>
</defs>
<rect x="0" y="0" width="700" height="700" fill="url(#p9bg)"/>
<g filter="url(#p9c)">
<path d="M200 345 L460 375 L480 440 L330 520 L230 430 Z" fill="#163814"/>
<path d="M0 330 L200 340 L260 480 L420 580 L400 700 L0 700 Z" fill="#386a2c"/>
<path d="M0 500 L150 600 L200 700 L0 700 Z" fill="#427634"/>
<path d="M250 320 L450 215 L680 200 L680 360 Z" fill="#386c2c"/>
<path d="M0 20 L300 20 L0 250 Z" fill="#1a4418"/>
<path d="M440 380 L680 380 L680 700 L440 700 Z" fill="#42743a"/>
</g>
<g filter="url(#p9b)" fill="none" stroke="#7c9c58" stroke-linecap="round">
<path d="M0 314 L230 330 L440 358 L680 372" stroke-width="6"/>
<path d="M0 268 C80 200 160 140 240 100 L340 18" stroke-width="4"/>
<path d="M230 328 C300 270 380 230 450 212 L680 195" stroke-width="5"/>
<path d="M195 340 C220 420 280 480 400 560" stroke-width="3" stroke="#5c8444"/>
<path d="M0 520 C60 560 120 600 160 640" stroke-width="3" stroke="#6c9450"/>
<path d="M300 360 C310 420 320 470 330 520 M360 365 C375 430 390 490 400 540 M420 370 C440 440 455 520 470 580 M480 375 C500 460 520 540 540 620 M540 378 C565 470 590 570 610 660 M600 380 C625 440 650 500 670 560" stroke-width="3" stroke="#6c9a52" opacity="0.75"/>
<path d="M330 440 L480 420 M340 500 L520 470 M380 560 L560 520 M470 620 L640 570 M520 450 L660 430 M560 520 L670 500" stroke-width="2" stroke="#5c8c46" opacity="0.7"/>
<path d="M420 30 C410 100 395 160 380 220 M480 30 C475 100 468 160 460 210 M540 30 L540 200 M610 30 L620 198 M360 30 C350 120 335 200 320 280" stroke-width="3" stroke="#6a9850" opacity="0.75"/>
<path d="M60 60 L200 130 M30 140 L120 190 M120 40 L260 90 M400 100 L540 90 M390 160 L620 140 M470 260 L660 250 M500 310 L660 300" stroke-width="2" stroke="#5a8a44" opacity="0.7"/>
<path d="M60 340 C75 420 90 500 100 560 M120 340 C140 430 160 520 180 600 M20 340 L40 480 M180 350 C200 420 225 500 250 560" stroke-width="3" stroke="#6c9c52" opacity="0.75"/>
<path d="M30 400 L170 380 M40 460 L190 440 M60 540 L230 510 M130 620 L300 600" stroke-width="2" stroke="#5c8c46" opacity="0.7"/>
</g>
<g filter="url(#p9b)">
<ellipse cx="92" cy="108" rx="16" ry="18" fill="url(#p9d)"/>
<ellipse cx="278" cy="172" rx="19" ry="22" fill="url(#p9d)"/>
<ellipse cx="475" cy="250" rx="21" ry="22" fill="url(#p9d)"/>
<ellipse cx="100" cy="296" rx="16" ry="13" fill="url(#p9d)"/>
<ellipse cx="175" cy="415" rx="16" ry="18" fill="url(#p9d)"/>
<ellipse cx="350" cy="422" rx="18" ry="16" fill="url(#p9d)"/>
<ellipse cx="580" cy="436" rx="21" ry="18" fill="url(#p9d)"/>
<ellipse cx="34" cy="482" rx="24" ry="29" fill="url(#p9d)"/>
<ellipse cx="497" cy="590" rx="24" ry="22" fill="url(#p9d)"/>
<ellipse cx="88" cy="628" rx="24" ry="37" fill="url(#p9d)" transform="rotate(15 88 628)"/>
<ellipse cx="606" cy="534" rx="16" ry="14" fill="url(#p9d)"/>
<ellipse cx="578" cy="320" rx="18" ry="13" fill="url(#p9d)"/>
<ellipse cx="442" cy="366" rx="16" ry="11" fill="url(#p9d)"/>
<ellipse cx="278" cy="562" rx="13" ry="13" fill="url(#p9d)"/>
<ellipse cx="425" cy="505" rx="11" ry="10" fill="url(#p9d)"/>
<ellipse cx="92" cy="375" rx="13" ry="11" fill="url(#p9d)"/>
<ellipse cx="150" cy="245" rx="11" ry="10" fill="url(#p9d)"/>
<ellipse cx="575" cy="152" rx="16" ry="11" fill="url(#p9d)"/>
<ellipse cx="268" cy="72" rx="13" ry="11" fill="url(#p9d)"/>
<ellipse cx="310" cy="668" rx="16" ry="10" fill="url(#p9d)"/>
<ellipse cx="500" cy="452" rx="10" ry="8" fill="url(#p9d)"/>
<ellipse cx="300" cy="282" rx="11" ry="10" fill="url(#p9d)"/>
<ellipse cx="52" cy="238" rx="11" ry="10" fill="url(#p9d)"/>
</g>
</svg></div>
  <div class="ph" id="p10" style="left:705.200px;top:389.800px"><svg viewBox="8 18 655 657" preserveAspectRatio="none">
<defs>
<linearGradient id="p10bg" x1="0" y1="0" x2="1" y2="0"><stop offset="0" stop-color="#8c3444"/><stop offset="0.12" stop-color="#6a4830"/><stop offset="0.25" stop-color="#5a3e2a"/><stop offset="0.7" stop-color="#66686c"/><stop offset="1" stop-color="#6c7278"/></linearGradient>
<linearGradient id="p10face" x1="0" y1="0" x2="1" y2="0.3"><stop offset="0" stop-color="#c48c64"/><stop offset="0.4" stop-color="#a86c46"/><stop offset="1" stop-color="#663a24"/></linearGradient>
<filter id="p10b" x="-10%" y="-10%" width="120%" height="120%"><feGaussianBlur stdDeviation="6"/></filter>
<filter id="p10c" x="-30%" y="-30%" width="160%" height="160%"><feGaussianBlur stdDeviation="22"/></filter>
</defs>
<rect x="0" y="0" width="700" height="700" fill="url(#p10bg)"/>
<g filter="url(#p10c)">
<ellipse cx="580" cy="400" rx="120" ry="80" fill="#98704c"/>
<ellipse cx="600" cy="480" rx="70" ry="36" fill="#b07a40"/>
<ellipse cx="580" cy="140" rx="110" ry="110" fill="#8c8e90"/>
<ellipse cx="30" cy="380" rx="40" ry="200" fill="#943040"/>
<ellipse cx="90" cy="350" rx="30" ry="200" fill="#7c6a44"/>
<ellipse cx="140" cy="420" rx="24" ry="50" fill="#a08080"/>
<ellipse cx="120" cy="38" rx="20" ry="16" fill="#3c8c4c"/>
<ellipse cx="580" cy="570" rx="100" ry="50" fill="#3c342a"/>
</g>
<g filter="url(#p10b)">

<path d="M0 605 L140 550 L220 700 L0 700 Z" fill="#585040"/>
<path d="M440 560 L520 520 L680 600 L680 700 L300 700 Z" fill="#564e3e"/>
<path d="M60 700 L128 560 L162 572 L112 700 Z" fill="#a8965e"/>
<path d="M505 535 L600 560 L610 700 L500 700 Z" fill="#8c7a4c"/>

<ellipse cx="478" cy="262" rx="30" ry="56" fill="#a0603e"/>

<path d="M270 500 L435 430 L455 545 L300 570 Z" fill="#7c4428"/>

<path d="M135 110 C170 70 250 55 320 60 C380 66 425 100 440 180 C450 250 448 320 435 370 C410 440 360 495 290 520 C240 525 200 495 180 450 C155 390 140 320 135 250 C130 200 130 150 135 110 Z" fill="url(#p10face)"/>
<path d="M150 100 C200 70 280 70 330 90 C320 130 260 150 200 150 C170 150 150 130 150 100 Z" fill="#d09870" opacity="0.6"/>
<path d="M380 110 C430 150 448 230 444 330 C430 400 400 450 370 480 C400 380 410 250 380 110 Z" fill="#54301e" opacity="0.7"/>

<path d="M148 80 C160 40 200 15 260 12 L450 12 C475 50 485 110 480 180 L470 235 L442 205 C435 150 420 110 395 92 C340 70 280 55 240 62 C210 66 180 78 165 95 Z" fill="#1c1612"/>

<path d="M138 200 C160 188 190 190 212 205 L210 218 C185 208 160 208 138 216 Z" fill="#1c1410"/>
<path d="M278 192 C310 175 360 175 392 198 L390 212 C355 198 315 198 280 208 Z" fill="#1c1410"/>
<ellipse cx="180" cy="240" rx="26" ry="12" fill="#2c1810"/>
<ellipse cx="326" cy="232" rx="32" ry="13" fill="#2c1810"/>
<path d="M215 250 C205 290 195 320 200 340 C215 352 250 350 270 338 C262 310 250 280 245 250 Z" fill="#c48a60" opacity="0.8"/>
<ellipse cx="208" cy="318" rx="10" ry="20" fill="#e8c0a0" opacity="0.6"/>

<path d="M178 385 C220 365 290 365 335 385 C380 375 420 350 440 320 C442 380 430 440 400 480 C360 515 300 530 250 522 C215 515 190 485 180 450 Z" fill="#3a2418" opacity="0.72"/>
<path d="M178 392 C215 368 290 366 335 388 L330 402 C290 386 220 388 184 408 Z" fill="#22150e"/>
<path d="M200 450 C240 440 290 440 320 450 C330 480 310 515 260 520 C225 515 205 490 200 450 Z" fill="#26180f"/>
<path d="M205 410 C240 400 290 402 318 412 C300 434 240 438 205 410 Z" fill="#96564a"/>

<path d="M140 545 C150 515 165 495 182 480 C210 530 260 560 330 555 C390 545 430 500 452 440 C480 460 505 490 512 522 C500 570 480 610 450 640 L300 700 L180 680 C160 640 145 595 140 545 Z" fill="#94743a"/>
<path d="M200 580 C260 600 340 595 420 560 L410 600 C340 630 260 635 200 615 Z" fill="#705426"/>
<path d="M300 530 C350 525 400 500 440 460 L450 500 C410 540 350 560 300 560 Z" fill="#5c4420" opacity="0.8"/>
</g>
</svg></div>

  
  <div class="t" id="mem-h" style="left:325px;top:513.0px;font-size:15.8px;font-weight:bold;letter-spacing:0.1px">Memories</div>
  <div class="card" id="card2" style="left:310px;top:537.3px;width:493px;height:90px"></div>
  <div class="ph" id="m1" style="left:325px;top:545px;width:44.500px;height:44.500px;border-radius:4px"><svg viewBox="42 42 618 613" preserveAspectRatio="none">
<defs><filter id="m1b" x="-10%" y="-10%" width="120%" height="120%"><feGaussianBlur stdDeviation="12"/></filter></defs>
<rect x="0" y="0" width="700" height="700" fill="#2c211d"/>
<g filter="url(#m1b)">
<path d="M200 30 L380 30 L370 190 L300 200 L230 160 Z" fill="#4f93df"/>
<path d="M200 40 L270 60 L280 180 L210 200 Z" fill="#5a6068"/>
<path d="M370 30 L680 30 L680 460 L600 420 L560 200 L400 150 Z" fill="#4a4a46"/>
<path d="M400 40 L560 40 L560 140 L400 150 Z" fill="#26221e"/>
<path d="M600 120 L680 100 L680 440 L620 440 Z" fill="#6a6c6c"/>

<path d="M395 200 C420 140 560 130 600 200 L600 260 L400 260 Z" fill="#1e1612"/>
<ellipse cx="510" cy="315" rx="108" ry="135" fill="#c69678"/>
<ellipse cx="480" cy="215" rx="70" ry="30" fill="#dcae90"/>
<path d="M420 245 L600 240 L600 270 L420 280 Z" fill="#7a5444" opacity="0.8"/>
<path d="M440 440 L560 450 L580 560 L440 540 Z" fill="#9a6a50"/>

<path d="M120 300 C130 220 220 170 310 185 C360 195 390 240 400 290 L300 240 L180 300 L150 370 Z" fill="#3a2a24"/>
<ellipse cx="295" cy="345" rx="115" ry="150" fill="#d9ae98" transform="rotate(-22 295 345)"/>
<ellipse cx="250" cy="270" rx="70" ry="40" fill="#e8c4b0" transform="rotate(-22 250 270)"/>
<path d="M215 330 L280 305 L285 330 L222 358 Z M320 290 L375 275 L380 300 L328 315 Z" fill="#4a2e26"/>
<ellipse cx="355" cy="430" rx="30" ry="16" fill="#b05a5a" transform="rotate(-22 355 430)"/>
<path d="M400 440 L450 430 L470 520 L420 530 Z" fill="#1a1210"/>

<path d="M42 550 L200 600 L260 660 L42 660 Z" fill="#94a81e"/>
<path d="M430 520 L500 530 L500 565 L440 560 Z" fill="#94a81e"/>
<path d="M30 365 C80 350 140 360 180 400 C230 450 300 490 420 525 L410 640 L200 605 L30 525 Z" fill="#ece8e8"/>
<path d="M60 460 C140 480 240 540 330 560 L320 590 C230 570 140 520 60 500 Z" fill="#d0ccd0"/>
<path d="M400 545 L600 560 L620 660 L380 660 Z" fill="#8a5a44"/>
<path d="M580 420 L670 450 L670 660 L600 660 C600 580 596 500 580 420 Z" fill="#e6e2da"/>
<path d="M150 620 L240 630 L240 660 L150 660 Z" fill="#2a2820"/>
</g>
</svg></div>
  <div class="t" id="m-t" style="left:378.5px;top:553.7px;font-size:13px;letter-spacing:-0.23px">West Orange &amp; New York</div>
  <div class="t gray" id="m-d" style="left:378.5px;top:572.3px;font-size:10.1px">Jul 14, 2022</div>
  <div class="t gray" id="m-c" style="left:730px;top:561px;font-size:13px;width:45px;text-align:right">42</div>
  <svg class="ico" id="i-chevr" style="left:784px;top:562.500px" width="6" height="10" viewBox="0 0 12 20">
    <path d="M2 2 L10 10 L2 18" fill="none" stroke="#b0b0b5" stroke-width="2.600" stroke-linecap="round" stroke-linejoin="round"/>
  </svg>
  <div class="sep" style="left:322px;top:596.500px;width:481px"></div>
  <div class="ph" id="m2" style="left:325px;top:604.500px;width:44.500px;height:44.500px;border-radius:4px;background:#b9cde6"><svg viewBox="0 0 100 100" preserveAspectRatio="none">
<rect width="100" height="100" fill="#b4cce8"/>
<ellipse cx="55" cy="3" rx="18" ry="7" fill="#3a2418"/>
</svg></div>
  <div id="homebar" style="left:320.8px;top:598.500px;width:234.2px;height:4.700px;border-radius:3px;background:#000"></div>
</div>
</body>
</html>
